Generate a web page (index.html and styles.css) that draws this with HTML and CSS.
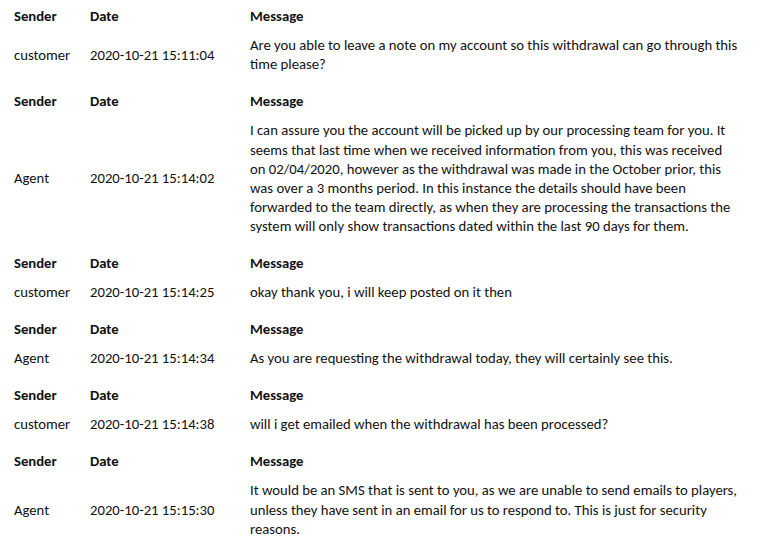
FILE: index.html
```html
<!DOCTYPE html>
<html>
<head>
    <title>Chat transcript</title>
    <link rel="stylesheet" href="styles.css">
</head>
<body>
    <div class="transcript">
        <table class="msg">
            <tr class="head"><th class="col-sender">Sender</th><th class="col-date">Date</th><th class="col-msg">Message</th></tr>
            <tr class="body"><td>customer</td><td>2020-10-21 15:11:04</td><td>Are you able to leave a note on my account so this withdrawal can go through this time please?</td></tr>
        </table>
        <table class="msg">
            <tr class="head"><th class="col-sender">Sender</th><th class="col-date">Date</th><th class="col-msg">Message</th></tr>
            <tr class="body"><td>Agent</td><td>2020-10-21 15:14:02</td><td>I can assure you the account will be picked up by our processing team for you. It seems that last time when we received information from you, this was received on 02/04/2020, however as the withdrawal was made in the October prior, this was over a 3 months period. In this instance the details should have been forwarded to the team directly, as when they are processing the transactions the system will only show transactions dated within the last 90 days for them.</td></tr>
        </table>
        <table class="msg">
            <tr class="head"><th class="col-sender">Sender</th><th class="col-date">Date</th><th class="col-msg">Message</th></tr>
            <tr class="body"><td>customer</td><td>2020-10-21 15:14:25</td><td>okay thank you, i will keep posted on it then</td></tr>
        </table>
        <table class="msg">
            <tr class="head"><th class="col-sender">Sender</th><th class="col-date">Date</th><th class="col-msg">Message</th></tr>
            <tr class="body"><td>Agent</td><td>2020-10-21 15:14:34</td><td>As you are requesting the withdrawal today, they will certainly see this.</td></tr>
        </table>
        <table class="msg">
            <tr class="head"><th class="col-sender">Sender</th><th class="col-date">Date</th><th class="col-msg">Message</th></tr>
            <tr class="body"><td>customer</td><td>2020-10-21 15:14:38</td><td>will i get emailed when the withdrawal has been processed?</td></tr>
        </table>
        <table class="msg">
            <tr class="head"><th class="col-sender">Sender</th><th class="col-date">Date</th><th class="col-msg">Message</th></tr>
            <tr class="body"><td>Agent</td><td>2020-10-21 15:15:30</td><td>It would be an SMS that is sent to you, as we are unable to send emails to players, unless they have sent in an email for us to respond to. This is just for security reasons.</td></tr>
        </table>
    </div>
</body>
</html>
```

FILE: styles.css
```css
body {
    margin: 0;
    background: #fff;
    color: #111;
    font-family: Carlito, Lato, "Liberation Sans", sans-serif;
    font-size: 14.7px;
    line-height: 19.2px;
}
.transcript {
    padding: 0 0 0 14px;
}
.msg {
    border-collapse: collapse;
    table-layout: fixed;
    width: 725px;
}
.msg th, .msg td {
    padding: 0;
    text-align: left;
    vertical-align: middle;
}
.msg th { font-weight: bold; }
.col-sender { width: 76px; }
.col-date { width: 160px; }
.col-msg { width: 489px; }
.head th { padding: 7px 0 5px; }
.body td { padding: 5px 0 10.6px; }
```
